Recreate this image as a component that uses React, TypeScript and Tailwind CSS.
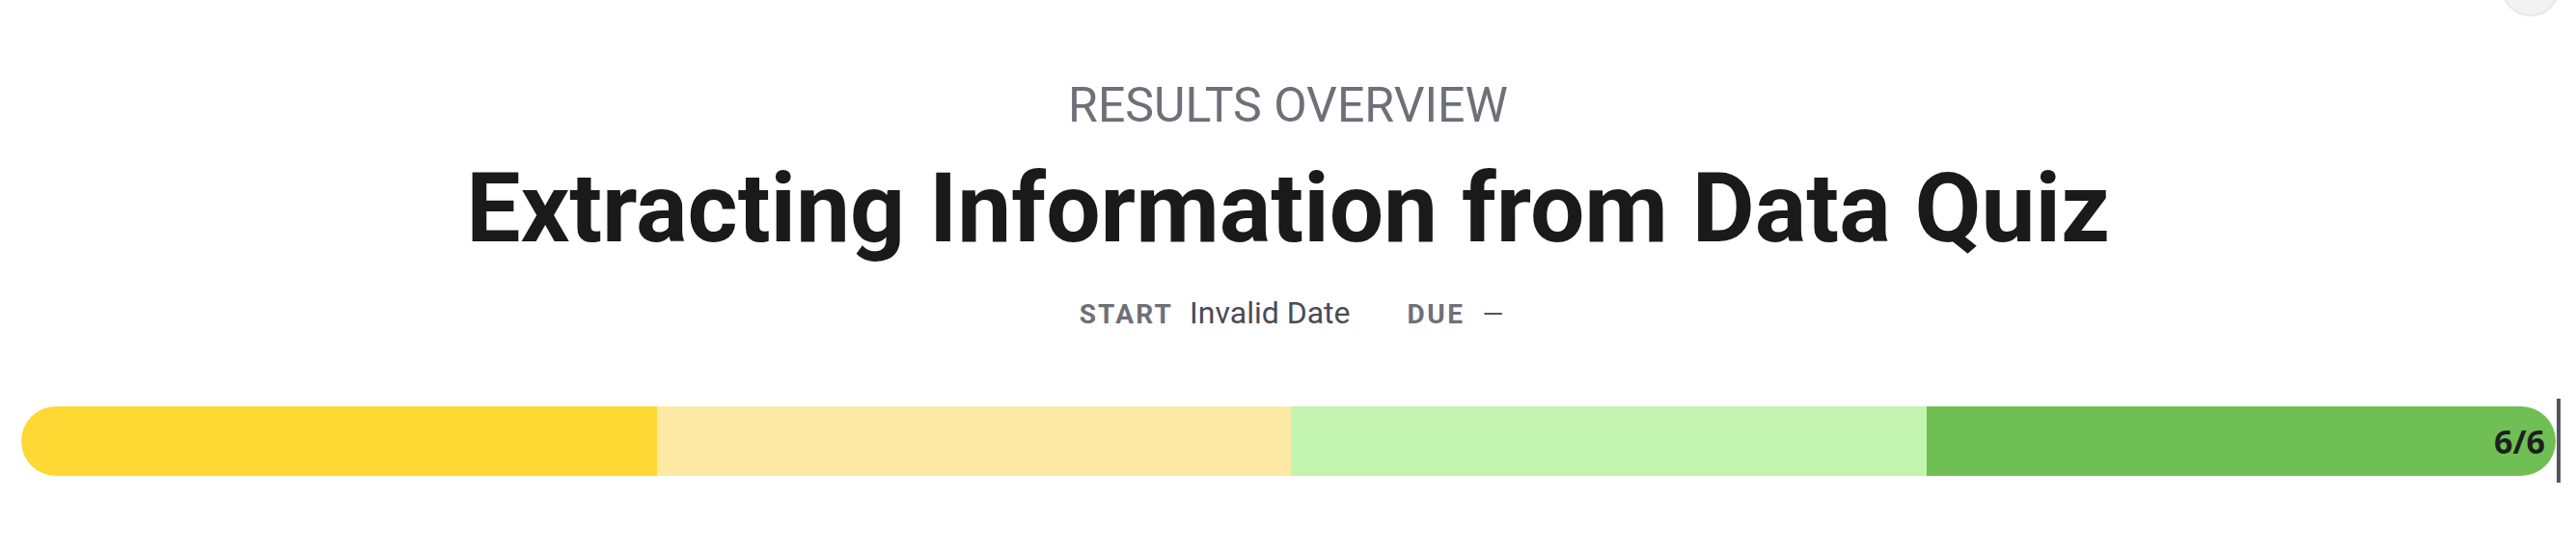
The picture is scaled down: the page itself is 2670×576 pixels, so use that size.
const segments = ['bg-[#fed833]', 'bg-[#fde9a3]', 'bg-[#c2f4af]', 'bg-[#6fbf55]'];

function ProgressBar({ done, total }: { done: number; total: number }) {
  return (
    <div className="flex items-center pl-[22px] pr-[16px]">
      <div className="flex h-[72px] flex-1 overflow-hidden rounded-full">
        <div className={`w-[659px] ${segments[0]}`} />
        <div className={`w-[657px] ${segments[1]}`} />
        <div className={`w-[659px] ${segments[2]}`} />
        <div className={`flex flex-1 items-center justify-end pr-[11px] ${segments[3]}`}>
          <span className="font-['Open_Sans',sans-serif] text-[34px] leading-none font-bold text-[#1f1f1f]">
            {done}/{total}
          </span>
        </div>
      </div>
      <div className="ml-[1px] h-[87px] w-[4px] bg-[#55555f]" />
    </div>
  );
}

export default function App() {
  return (
    <div className="relative min-h-screen overflow-hidden bg-white font-['Roboto',sans-serif]">
      {/* avatar peeking in from the top corner */}
      <div className="absolute top-[-43px] left-[2593px] h-[60px] w-[60px] rounded-full border-2 border-[#e8e8e8] bg-[#f2f2f2]" />

      <div className="flex flex-col items-center pt-[84px]">
        <p className="text-[50px] leading-[50px] font-normal text-[#6f6f79]">RESULTS OVERVIEW</p>
        <h1 className="mt-[32px] text-[100px] leading-[100px] font-bold text-[#1a1a1a]">
          Extracting Information from Data Quiz
        </h1>
        <div className="mt-[42px] flex items-baseline pl-[7px] text-[32px] leading-[32px]">
          <span className="text-[28px] font-bold tracking-[2.2px] text-[#6f6f79]">START</span>
          <span className="ml-[17px] text-[#4b4b55]">Invalid Date</span>
          <span className="ml-[59px] text-[28px] font-bold tracking-[2.5px] text-[#6f6f79]">DUE</span>
          <span className="ml-[18px] text-[28px] text-[#55555f]">—</span>
        </div>
      </div>

      <div className="mt-[71px]">
        <ProgressBar done={6} total={6} />
      </div>
    </div>
  );
}
